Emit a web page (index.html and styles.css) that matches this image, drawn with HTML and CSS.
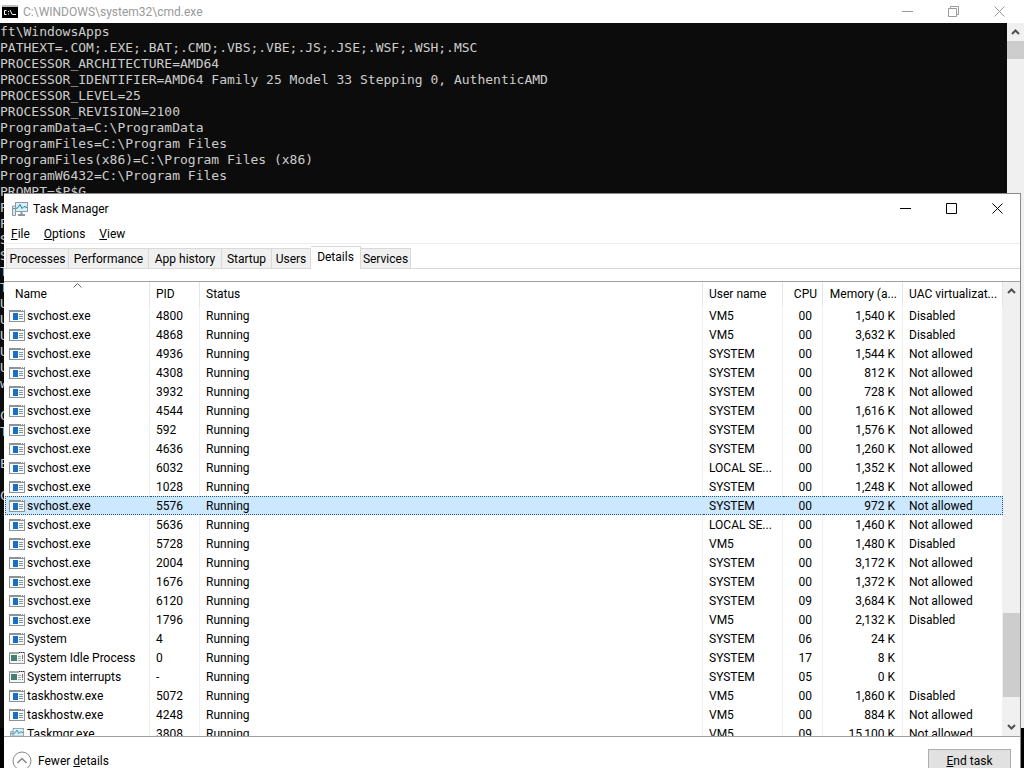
FILE: index.html
```html
<!DOCTYPE html>
<html lang="en">
<head>
    <meta charset="UTF-8">
    <meta name="viewport" content="width=device-width, initial-scale=1.0">
    <title>Task Manager</title>
    <link rel="stylesheet" href="styles.css">
</head>
<body>
    <!-- Icons shared by the title bars and the process list -->
    <svg class="icon-defs" aria-hidden="true">
        <symbol id="icon-app" viewBox="0 0 16 12">
            <rect x="0.5" y="0.5" width="15" height="11" fill="#f7f9fa" stroke="#8b9399"/>
            <rect x="0" y="0" width="16" height="2" fill="#8b9399"/>
            <rect x="12" y="0" width="1" height="1" fill="#fff"/>
            <rect x="14" y="0" width="1" height="1" fill="#fff"/>
            <rect x="4" y="3" width="5" height="7" fill="#1a6fc0"/>
            <path d="M10 4.500h4M10 6.500h4M10 8.500h4" stroke="#7f96a8"/>
        </symbol>
        <symbol id="icon-system" viewBox="0 0 16 12">
            <rect x="0.5" y="0.5" width="15" height="11" fill="#f4f6f5" stroke="#8b9399"/>
            <path d="M0 1h10" stroke="#a5abad" stroke-width="2"/>
            <path d="M10 0.5h1M12 0.5h1M14 0.5h1" stroke="#333"/>
            <rect x="2" y="3" width="6" height="6" fill="#44806f"/>
            <path d="M9 4.5h3M9 6.5h3M9 8.5h3" stroke="#a9b3af"/>
            <path d="M13.5 3v4M13.5 8v1" stroke="#777"/>
        </symbol>
        <symbol id="icon-taskmgr" viewBox="0 0 16 14">
            <path d="M0.5 4v9.500h3V4z" fill="#dfe5e8" stroke="#8b9aa3"/>
            <path d="M1 6.500h2" stroke="#5e8f9f"/>
            <rect x="3.500" y="0.500" width="12" height="9" fill="#d5f1f7" stroke="#8b9aa3"/>
            <path d="M4 6.500l2-1 2-3 2 4 2-2 3 1" fill="none" stroke="#247c96"/>
            <path d="M9.500 10v2M6 13h7" stroke="#8b989f" stroke-width="2"/>
        </symbol>
        <symbol id="icon-min" viewBox="0 0 11 11"><path d="M0 5.500h11" stroke="currentColor"/></symbol>
        <symbol id="icon-max" viewBox="0 0 11 11"><path d="M0.500 0.500h10v10h-10z" fill="none" stroke="currentColor"/></symbol>
        <symbol id="icon-restore" viewBox="0 0 11 11"><path d="M0.500 2.500h8v8h-8zM2.500 2V0.500h8v8H9" fill="none" stroke="currentColor"/></symbol>
        <symbol id="icon-close" viewBox="0 0 11 11"><path d="M0.500 0.500l10 10M10.500 0.500l-10 10" stroke="currentColor"/></symbol>
        <symbol id="icon-up" viewBox="0 0 9 6"><path d="M1 5l3.500-3.500L8 5" fill="none" stroke="currentColor" stroke-width="2"/></symbol>
        <symbol id="icon-down" viewBox="0 0 9 6"><path d="M1 1l3.500 3.500L8 1" fill="none" stroke="currentColor" stroke-width="2"/></symbol>
    </svg>

    <div class="desktop">
        <section class="cmd">
            <header class="title-bar cmd-title">
                <svg class="cmd-icon" viewBox="0 0 16 13">
                    <rect width="16" height="13" fill="#000"/>
                    <rect width="16" height="2" fill="#b9bdc0"/>
                    <path d="M4.500 5.500h-2v4h2M6.500 6v1M6.500 8.500v1M8 5l2.500 5M11 9.500h3" fill="none" stroke="#fff"/>
                </svg>
                <span class="title">C:\WINDOWS\system32\cmd.exe</span>
                <button class="win-btn" aria-label="Minimize"><svg><use href="#icon-min"/></svg></button>
                <button class="win-btn" aria-label="Restore"><svg><use href="#icon-restore"/></svg></button>
                <button class="win-btn" aria-label="Close"><svg><use href="#icon-close"/></svg></button>
            </header>
            <div class="cmd-body">
<pre class="console">ft\WindowsApps
PATHEXT=.COM;.EXE;.BAT;.CMD;.VBS;.VBE;.JS;.JSE;.WSF;.WSH;.MSC
PROCESSOR_ARCHITECTURE=AMD64
PROCESSOR_IDENTIFIER=AMD64 Family 25 Model 33 Stepping 0, AuthenticAMD
PROCESSOR_LEVEL=25
PROCESSOR_REVISION=2100
ProgramData=C:\ProgramData
ProgramFiles=C:\Program Files
ProgramFiles(x86)=C:\Program Files (x86)
ProgramW6432=C:\Program Files
PROMPT=$P$G
P
P
S
S
T
T
U
U
U
U
U
w

C
T

E

C</pre>
                <div class="scrollbar">
                    <button class="scroll-btn" aria-label="Scroll up"><svg><use href="#icon-up"/></svg></button>
                    <div class="thumb cmd-thumb"></div>
                </div>
            </div>
        </section>

        <section class="taskmgr">
            <header class="title-bar">
                <svg class="taskmgr-icon"><use href="#icon-taskmgr"/></svg>
                <span class="title">Task Manager</span>
                <button class="win-btn" aria-label="Minimize"><svg><use href="#icon-min"/></svg></button>
                <button class="win-btn" aria-label="Maximize"><svg><use href="#icon-max"/></svg></button>
                <button class="win-btn" aria-label="Close"><svg><use href="#icon-close"/></svg></button>
            </header>
            <nav class="menu">
                <button><u>F</u>ile</button>
                <button><u>O</u>ptions</button>
                <button><u>V</u>iew</button>
            </nav>
            <div class="tabs" role="tablist">
                <button role="tab">Processes</button>
                <button role="tab">Performance</button>
                <button role="tab">App history</button>
                <button role="tab">Startup</button>
                <button role="tab">Users</button>
                <button role="tab" class="active" aria-selected="true">Details</button>
                <button role="tab">Services</button>
            </div>
            <div class="list">
                <div class="list-view">
                    <table>
                        <colgroup>
                            <col class="col-name"><col class="col-pid"><col><col class="col-user">
                            <col class="col-cpu"><col class="col-memory"><col class="col-uac">
                        </colgroup>
                        <thead>
                            <tr>
                                <th class="sorted">Name<svg class="sort-arrow" viewBox="0 0 9 5"><path d="M0.500 4.500l4-4 4 4" fill="none" stroke="#666"/></svg></th>
                                <th>PID</th>
                                <th>Status</th>
                                <th>User name</th>
                                <th class="num">CPU</th>
                                <th class="num">Memory (a...</th>
                                <th>UAC virtualizat...</th>
                            </tr>
                        </thead>
                        <tbody id="processes"></tbody>
                    </table>
                </div>
                <div class="scrollbar">
                    <button class="scroll-btn" aria-label="Scroll up"><svg><use href="#icon-up"/></svg></button>
                    <div class="track-before"></div>
                    <div class="thumb list-thumb"></div>
                    <div class="track-after"></div>
                    <button class="scroll-btn" aria-label="Scroll down"><svg><use href="#icon-down"/></svg></button>
                </div>
            </div>
            <footer class="footer">
                <button class="fewer">
                    <svg viewBox="0 0 20 20"><circle cx="10" cy="10" r="9" fill="none" stroke="#888"/><path d="M5.500 12l4.500-4.500 4.500 4.500" fill="none" stroke="#888" stroke-width="1.500"/></svg>
                    <span>Fewer <u>d</u>etails</span>
                </button>
                <button class="end-task"><u>E</u>nd task</button>
            </footer>
        </section>
    </div>

    <script>
        // name, pid, user, cpu, memory, UAC virtualization
        const processes = [
            ["svchost.exe", "4800", "VM5", "00", "1,540 K", "Disabled"],
            ["svchost.exe", "4868", "VM5", "00", "3,632 K", "Disabled"],
            ["svchost.exe", "4936", "SYSTEM", "00", "1,544 K", "Not allowed"],
            ["svchost.exe", "4308", "SYSTEM", "00", "812 K", "Not allowed"],
            ["svchost.exe", "3932", "SYSTEM", "00", "728 K", "Not allowed"],
            ["svchost.exe", "4544", "SYSTEM", "00", "1,616 K", "Not allowed"],
            ["svchost.exe", "592", "SYSTEM", "00", "1,576 K", "Not allowed"],
            ["svchost.exe", "4636", "SYSTEM", "00", "1,260 K", "Not allowed"],
            ["svchost.exe", "6032", "LOCAL SE...", "00", "1,352 K", "Not allowed"],
            ["svchost.exe", "1028", "SYSTEM", "00", "1,248 K", "Not allowed"],
            ["svchost.exe", "5576", "SYSTEM", "00", "972 K", "Not allowed"],
            ["svchost.exe", "5636", "LOCAL SE...", "00", "1,460 K", "Not allowed"],
            ["svchost.exe", "5728", "VM5", "00", "1,480 K", "Disabled"],
            ["svchost.exe", "2004", "SYSTEM", "00", "3,172 K", "Not allowed"],
            ["svchost.exe", "1676", "SYSTEM", "00", "1,372 K", "Not allowed"],
            ["svchost.exe", "6120", "SYSTEM", "09", "3,684 K", "Not allowed"],
            ["svchost.exe", "1796", "VM5", "00", "2,132 K", "Disabled"],
            ["System", "4", "SYSTEM", "06", "24 K", ""],
            ["System Idle Process", "0", "SYSTEM", "17", "8 K", ""],
            ["System interrupts", "-", "SYSTEM", "05", "0 K", ""],
            ["taskhostw.exe", "5072", "VM5", "00", "1,860 K", "Disabled"],
            ["taskhostw.exe", "4248", "VM5", "00", "884 K", "Not allowed"],
            ["Taskmgr.exe", "3808", "VM5", "09", "15,100 K", "Not allowed"]
        ];

        // Anything not listed here gets the generic app icon
        const icons = {
            "System Idle Process": "system",
            "System interrupts": "system",
            "Taskmgr.exe": "taskmgr"
        };

        const selectedPid = "5576";

        document.getElementById("processes").innerHTML = processes.map(function (p) {
            const [name, pid, user, cpu, memory, uac] = p;
            return `<tr class="${pid === selectedPid ? "selected" : ""}">
                <td class="name"><svg><use href="#icon-${icons[name] || "app"}"/></svg>${name}</td>
                <td>${pid}</td>
                <td>Running</td>
                <td>${user}</td>
                <td class="num">${cpu}</td>
                <td class="num">${memory}</td>
                <td>${uac}</td>
            </tr>`;
        }).join("");
    </script>
</body>
</html>
```

FILE: styles.css
```css
* {
    box-sizing: border-box;
}

body {
    margin: 0;
    font-family: Roboto, "Open Sans", sans-serif;
    font-size: 12px;
    line-height: 16px;
    color: #000;
}

button {
    font: inherit;
    color: inherit;
    background: none;
    border: none;
    padding: 0;
    white-space: nowrap;
}

.icon-defs {
    position: absolute;
    width: 0;
    height: 0;
}

.desktop {
    position: relative;
    height: 100vh;
    overflow: hidden;
    background: #000;
}

/* Title bars */
.title-bar {
    display: flex;
    align-items: center;
    height: 29px;
    padding-left: 7px;
    background: #fff;
}

.title {
    flex: 1;
    padding-left: 5px;
}

.win-btn {
    display: flex;
    align-items: center;
    justify-content: center;
    width: 46px;
    height: 100%;
}

.win-btn svg {
    width: 11px;
    height: 11px;
}

/* Command prompt */
.cmd {
    display: flex;
    flex-direction: column;
    height: calc(100% - 40px);
}

.cmd-title {
    height: 23px;
    padding-left: 2px;
    padding-right: 2px;
    color: #999;
}

.cmd-icon {
    width: 16px;
    height: 13px;
}

.cmd-body {
    display: flex;
    flex: 1;
    min-height: 0;
}

.console {
    flex: 1;
    margin: 0;
    padding-top: 1px;
    overflow: hidden;
    background: #0c0c0c;
    color: #ccc;
    font-family: "DejaVu Sans Mono", monospace;
    font-size: 13px;
    line-height: 16px;
}

/* Scrollbars */
.scrollbar {
    display: flex;
    flex-direction: column;
    width: 17px;
    background: #f0f0f0;
}

.scroll-btn {
    display: flex;
    align-items: center;
    justify-content: center;
    height: 18px;
    color: #505050;
}

.scroll-btn svg {
    width: 9px;
    height: 6px;
}

.thumb {
    background: #cdcdcd;
}

.cmd-thumb {
    height: 18px;
}

.list-thumb {
    height: 84px;
}

.track-before {
    flex: 15;
}

.track-after {
    flex: 1;
}

/* Task Manager window */
.taskmgr {
    position: absolute;
    top: 193px;
    left: 4px;
    right: 3px;
    bottom: -16px;
    display: flex;
    flex-direction: column;
    background: #fff;
    border-top: 1px solid #8a8a8a;
    border-right: 1px solid #8a8a8a;
}

.taskmgr-icon {
    width: 16px;
    height: 14px;
    margin-left: 1px;
}

.menu {
    display: flex;
    gap: 14px;
    height: 21px;
    padding: 1px 0 0 7px;
    border-bottom: 1px solid #eee;
}

.tabs {
    display: grid;
    grid-template-columns: 63px 80px 73px 50px 39px 50px 50px;
    align-items: end;
    height: 25px;
    padding-left: 2px;
    border-bottom: 1px solid #d9d9d9;
}

.tabs button {
    height: 20px;
    background: #f0f0f0;
    border: 1px solid #d9d9d9;
    border-left: none;
    border-bottom: none;
}

.tabs button:first-child {
    border-left: 1px solid #d9d9d9;
}

.tabs .active {
    height: 23px;
    margin-bottom: -1px;
    padding-bottom: 2px;
    background: #fff;
}

/* Process list */
.list {
    display: flex;
    flex: 1;
    min-height: 0;
    margin-top: 12px;
    border-top: 1px solid #a0a0a0;
    border-bottom: 1px solid #a0a0a0;
}

.list-view {
    flex: 1;
    min-width: 0;
    padding-left: 1px;
    overflow: hidden;
}

table {
    width: 100%;
    table-layout: fixed;
    border-collapse: separate;
    border-spacing: 0;
}

.col-name {
    width: 145px;
}

.col-pid {
    width: 50px;
}

.col-user,
.col-memory {
    width: 80px;
}

.col-cpu {
    width: 40px;
}

.col-uac {
    width: 100px;
}

th,
td {
    height: 19px;
    padding: 0 0 0 6px;
    border-right: 1px solid #f0f0f0;
    text-align: left;
    font-weight: normal;
    white-space: nowrap;
}

th {
    height: 24px;
    border-right-color: #e5e5e5;
}

th.num {
    padding-right: 5px;
    text-align: right;
}

td.num {
    padding-right: 7px;
    text-align: right;
}

td:nth-child(5) {
    padding-right: 10px;
}

.sorted {
    position: relative;
    padding-left: 10px;
}

.sort-arrow {
    position: absolute;
    top: 1px;
    left: calc(50% - 4px);
    width: 9px;
    height: 5px;
}

.name {
    padding-left: 4px;
}

.name svg {
    width: 16px;
    height: 12px;
    margin-right: 2px;
    vertical-align: -2px;
}

.selected td {
    height: 19px;
    background: #cce8ff;
    border-top: 1px dotted #26567c;
    border-bottom: 1px dotted #26567c;
    border-right-color: #cce8ff;
}

.selected td:first-child {
    border-left: 1px dotted #26567c;
    padding-left: 3px;
}

.selected td:last-child {
    border-right: 1px dotted #26567c;
}

/* Footer */
.footer {
    display: flex;
    align-items: center;
    justify-content: space-between;
    height: 47px;
    padding: 0 9px 0 8px;
}

.fewer {
    display: flex;
    align-items: center;
    gap: 6px;
}

.fewer svg {
    width: 20px;
    height: 20px;
}

.end-task {
    width: 83px;
    height: 23px;
    background: #e1e1e1;
    border: 1px solid #adadad;
}
```
